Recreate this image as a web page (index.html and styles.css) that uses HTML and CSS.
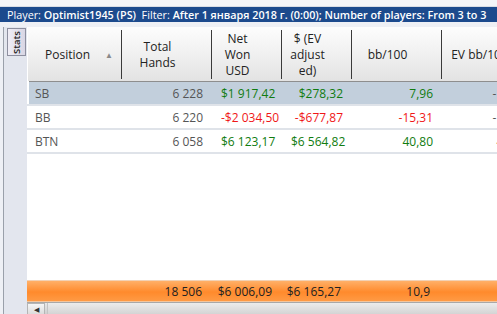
FILE: index.html
```html
<!DOCTYPE html>
<html lang="en">
<head>
  <meta charset="UTF-8" />
  <title>Player Stats</title>
  <link rel="stylesheet" href="styles.css">
</head>
<body>

  <div class="topstrip"></div>
  <div class="titlebar">
    Player: <b>Optimist1945 (PS)</b>&nbsp;&nbsp;Filter: <b>After 1 января 2018 г. (0:00); Number of players: From 3 to 3</b>
  </div>

  <div class="main">
    <div class="side">
      <div class="tab"><span>Stats</span></div>
    </div>

    <div class="grid">
      <table class="stats">
        <colgroup>
          <col class="c-pos"><col class="c-hands"><col class="c-won"><col class="c-ev"><col class="c-bb"><col class="c-evbb">
        </colgroup>
        <thead>
          <tr>
            <th><div class="hc left">Position <span class="sort">▲</span></div></th>
            <th><div class="hc">Total<br>Hands</div></th>
            <th><div class="hc">Net<br>Won<br>USD</div></th>
            <th><div class="hc">$ (EV<br>adjust<br>ed)</div></th>
            <th><div class="hc">bb/100</div></th>
            <th><div class="hc">EV bb/100</div></th>
          </tr>
        </thead>
        <tbody>
          <tr class="sel">
            <td class="pos">SB</td>
            <td class="num">6 228</td>
            <td class="num pos-v">$1 917,42</td>
            <td class="num pos-v">$278,32</td>
            <td class="num pos-v">7,96</td>
            <td class="num dim">-12,40</td>
          </tr>
          <tr>
            <td class="pos">BB</td>
            <td class="num">6 220</td>
            <td class="num neg">-$2 034,50</td>
            <td class="num neg">-$677,87</td>
            <td class="num neg">-15,31</td>
            <td class="num dim">-15,95</td>
          </tr>
          <tr>
            <td class="pos">BTN</td>
            <td class="num">6 058</td>
            <td class="num pos-v">$6 123,17</td>
            <td class="num pos-v">$6 564,82</td>
            <td class="num pos-v">40,80</td>
            <td class="num dim">45,20</td>
          </tr>
        </tbody>
      </table>

      <div class="filler"></div>

      <div class="totals">
        <span class="t-pos"></span>
        <span class="t-hands">18 506</span>
        <span class="t-won">$6 006,09</span>
        <span class="t-ev">$6 165,27</span>
        <span class="t-bb">10,9</span>
      </div>

      <div class="hscroll">
        <div class="arrow">◀</div>
        <div class="track"></div>
      </div>
    </div>
  </div>

</body>
</html>
```

FILE: styles.css
```css
html, body {
  margin: 0;
  padding: 0;
}

body {
  width: 497px;
  height: 314px;
  overflow: hidden;
  font-family: 'Open Sans', 'Noto Sans', sans-serif;
  font-size: 12px;
  color: #222;
  background: #eef0f5;
  display: flex;
  flex-direction: column;
}

.topstrip {
  height: 6px;
  background: #f4f5f8;
  border-bottom: 1px solid #d9dde5;
}

.titlebar {
  height: 15px;
  line-height: 15px;
  background: #1c4a8d;
  color: #fff;
  padding-left: 7px;
  white-space: nowrap;
  font-size: 10.8px;
}

.titlebar b {
  font-weight: 600;
}

.main {
  flex: 1;
  display: flex;
  padding-top: 5px;
  min-height: 0;
}

.side {
  box-sizing: border-box;
  width: 24px;
  margin-left: 3px;
  border-left: 1px solid #9aa0aa;
  background: #e3e6ee;
  padding-left: 3px;
}

.tab {
  margin-top: 1px;
  width: 17px;
  height: 26px;
  border: 1px solid #8d8f9f;
  background: linear-gradient(to right, #f0eef6, #d8d6e4);
  display: flex;
  align-items: center;
  justify-content: center;
}

.tab span {
  transform: rotate(-90deg);
  font-size: 9.5px;
  font-weight: 600;
  color: #222;
}

.grid {
  flex: 1;
  display: flex;
  flex-direction: column;
  background: #fff;
  overflow: hidden;
  min-width: 0;
}

.stats {
  border-collapse: collapse;
  table-layout: fixed;
  width: 508px;
}

.c-pos { width: 94px; }
.c-hands { width: 90px; }
.c-won { width: 70px; }
.c-ev { width: 70px; }
.c-bb { width: 90px; }
.c-evbb { width: 94px; }

thead th {
  padding: 3px 0 2px 0;
  font-weight: normal;
  background: linear-gradient(#fdfdfd, #e3e3e3);
  border-bottom: 1px solid #8e8e8e;
}

.hc {
  height: 49px;
  border-right: 1px solid #3a3a3a;
  display: flex;
  align-items: center;
  justify-content: center;
  text-align: center;
  line-height: 16px;
  padding-right: 18px;
  color: #222;
}

.hc.left {
  justify-content: flex-start;
  padding-left: 17px;
  padding-right: 0;
}

.sort {
  font-size: 8px;
  color: #8a8a8a;
  margin-left: 15px;
}

tbody td {
  height: 22px;
  padding: 0 9px;
  border-bottom: 2px solid #dfe3e9;
  white-space: nowrap;
  overflow: hidden;
  color: #555;
}

tbody tr.sel td {
  background: #c2cfdc;
}

tbody td.pos {
  padding-left: 6px;
  border-left: 2px solid #fff;
}

.num {
  text-align: right;
}

.pos-v {
  color: #107c10;
}

.neg {
  color: #f01818;
}

.dim {
  color: #555;
}

.filler {
  flex: 1;
}

.totals {
  height: 20px;
  display: flex;
  align-items: center;
  background: linear-gradient(#ffb068, #ff8a2c 55%, #ff9a44);
  border-top: 1px solid #f2d2b6;
  border-bottom: 1px solid #f5c69c;
  color: #222;
  white-space: nowrap;
}

.totals span {
  text-align: right;
  padding-right: 9px;
  box-sizing: border-box;
  flex: none;
}

.t-pos { width: 94px; }
.t-hands { width: 90px; }
.t-won { width: 70px; }
.t-ev { width: 70px; padding-right: 10px !important; }
.t-bb { width: 90px; padding-right: 11px !important; }

.hscroll {
  height: 11px;
  display: flex;
  border-top: 1px solid #a8a8a8;
  background: linear-gradient(#e8e8e8, #cfcfcf);
}

.arrow {
  width: 16px;
  border: 1px solid #b5b5b5;
  border-bottom: none;
  background: linear-gradient(#f6f6f6, #dcdcdc);
  font-size: 7px;
  color: #333;
  text-align: center;
  line-height: 11px;
}

.track {
  flex: 1;
  margin-left: 2px;
  border-left: 1px solid #c4c4c4;
  background: linear-gradient(#ececec, #d4d4d4);
}
```
